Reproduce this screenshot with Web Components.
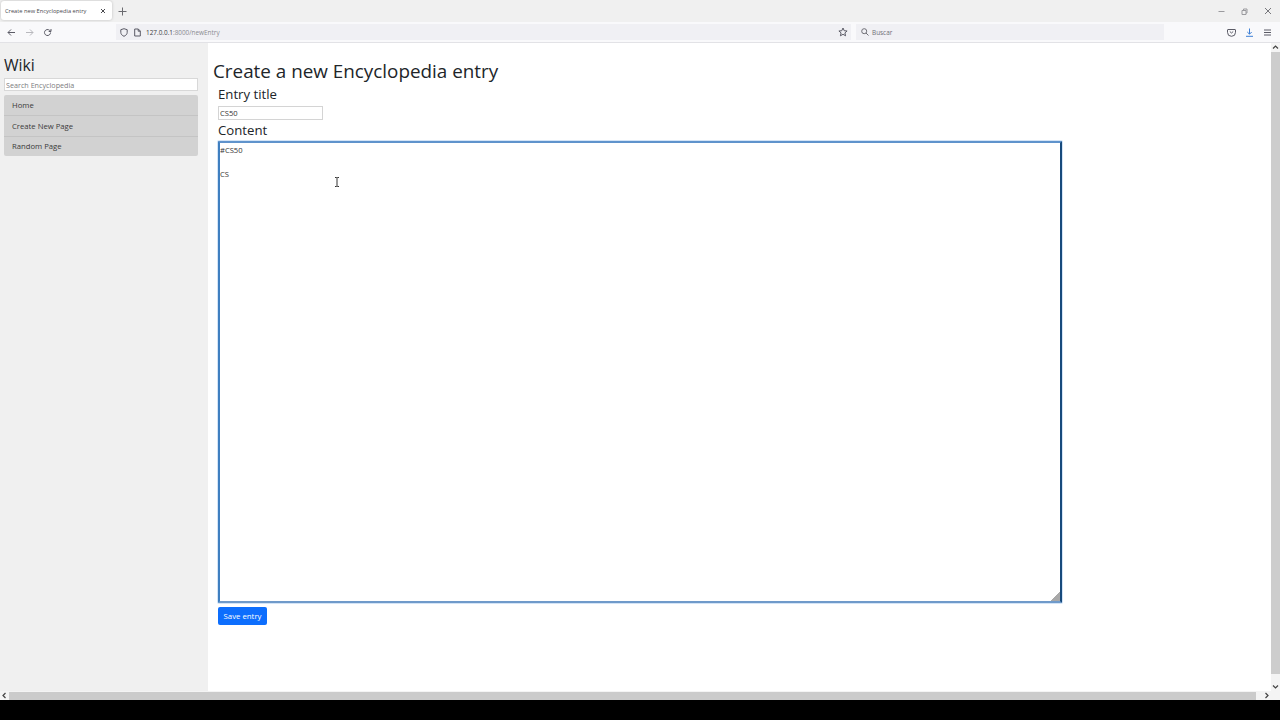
<!DOCTYPE html>
<html lang="en">
<head>
<meta charset="utf-8">
<title>Create new Encyclopedia entry</title>
<style>
  html, body { margin: 0; height: 100%; background: #000; overflow: hidden; }
  body { font-family: "Open Sans", "Noto Sans", sans-serif; }
  #shot { display: flex; flex-direction: column; width: 1280px; height: 700px; background: #fff; }
</style>
</head>
<body>
<div id="shot">
  <browser-tabs></browser-tabs>
  <browser-toolbar></browser-toolbar>
  <browser-viewport>
    <wiki-sidebar></wiki-sidebar>
    <entry-form></entry-form>
  </browser-viewport>
  <h-scrollbar></h-scrollbar>
</div>

<script>
class BrowserTabs extends HTMLElement {
  connectedCallback() {
    this.attachShadow({ mode: 'open' });
    this.shadowRoot.innerHTML = `
      <style>
        :host { display: flex; align-items: center; height: 22px; flex: none; background: #f0f0f0; color: #15141a; }
        .tab {
          display: flex; align-items: center; justify-content: space-between; align-self: flex-start;
          box-sizing: border-box; width: 111px; height: 19px; margin: 1px 0 0 1px; padding: 0 6px 0 4px;
          background: #fff; border-radius: 3px; box-shadow: 0 0 3px rgba(0,0,0,.22);
          font-size: 5.7px; color: #4a4a4f; white-space: nowrap;
        }
        svg { display: block; fill: none; stroke: currentColor; stroke-width: 1; }
        .new { margin-left: 6px; color: #6a6a6f; }
        .win { margin-left: auto; display: flex; align-items: center; gap: 16px; padding-right: 8px; color: #9a9a9e; }
        .close { color: #77777c; }
      </style>
      <div class="tab"><span>Create new Encyclopedia entry</span>
        <svg width="6" height="6" viewBox="0 0 6 6"><path d="M1 1l4 4M5 1L1 5"/></svg>
      </div>
      <svg class="new" width="9" height="9" viewBox="0 0 9 9"><path d="M4.5 .5v8M.5 4.5h8"/></svg>
      <div class="win">
        <svg width="7" height="7" viewBox="0 0 7 7"><path d="M.5 3.5h6"/></svg>
        <svg width="7" height="7" viewBox="0 0 7 7"><path d="M1 2.5h4v4H1zM2.5 2.5V1h3.5v4H5"/></svg>
        <svg class="close" width="8" height="8" viewBox="0 0 8 8"><path d="M1 1l6 6M7 1L1 7"/></svg>
      </div>
    `;
  }
}

class BrowserToolbar extends HTMLElement {
  connectedCallback() {
    this.attachShadow({ mode: 'open' });
    this.shadowRoot.innerHTML = `
      <style>
        :host {
          display: flex; align-items: center; box-sizing: border-box; height: 21px; flex: none;
          background: #f9f9fb; border-bottom: 1px solid #e2e2e6; color: #5b5b66; font-size: 6.4px;
        }
        svg { display: block; flex: none; fill: none; stroke: currentColor; stroke-width: 1; }
        .nav { display: flex; align-items: center; gap: 9px; margin-left: 7px; width: 109px; }
        .fwd { color: #b8b8bd; }
        .url {
          display: flex; align-items: center; box-sizing: border-box; width: 735px; height: 16px;
          padding: 0 3px 0 4px; background: #f0f0f4;
        }
        .url .addr { margin-left: 5px; color: #8a8a90; }
        .url .addr b { font-weight: 400; color: #3c3c42; }
        .url .star { margin-left: auto; }
        .find {
          display: flex; align-items: center; gap: 3px; box-sizing: border-box;
          width: 308px; height: 16px; margin-left: 5px; padding-left: 5px; background: #f0f0f4; color: #6f6f76;
        }
        .tools { display: flex; align-items: center; gap: 9px; margin-left: auto; padding-right: 8px; }
        .dl { color: #3d7fd6; }
      </style>
      <div class="nav">
        <svg width="9" height="9" viewBox="0 0 9 9"><path d="M8 4.5H1M4 1.5l-3 3 3 3"/></svg>
        <svg class="fwd" width="9" height="9" viewBox="0 0 9 9"><path d="M1 4.5h7M5 1.5l3 3-3 3"/></svg>
        <svg width="9" height="9" viewBox="0 0 9 9"><path d="M7.5 4.5a3 3 0 1 1-1-2.2L8 3.5V1M8 3.5H5.7"/></svg>
      </div>
      <div class="url">
        <svg width="8" height="9" viewBox="0 0 8 9"><path d="M4 .7l3.2 1v2.6c0 2-1.4 3.2-3.2 4-1.8-.8-3.2-2-3.2-4V1.700z"/></svg>
        <svg style="margin-left:6px" width="7" height="9" viewBox="0 0 7 9"><path d="M.7 1h3.600l2 2v5H.7zM4.200 1v2.200h2"/></svg>
        <span class="addr"><b>127.0.0.1</b>:8000/newEntry</span>
        <svg class="star" width="10" height="10" viewBox="0 0 10 10"><path d="M5 1l1.200 2.700 2.900.3-2.200 1.900.7 2.900L5 7.300 2.400 8.800l.7-2.900L.9 4l2.900-.3z"/></svg>
      </div>
      <div class="find">
        <svg width="8" height="8" viewBox="0 0 8 8"><circle cx="3.200" cy="3.200" r="2.500"/><path d="M5 5l2.500 2.500"/></svg>
        <span>Buscar</span>
      </div>
      <div class="tools">
        <svg width="9" height="9" viewBox="0 0 9 9"><path d="M1 1.500h7a.5.5 0 0 1 .5.5v2.300a4 4 0 0 1-8 0V2a.5.5 0 0 1 .5-.5zM2.800 3.500L4.500 5l1.700-1.500"/></svg>
        <svg class="dl" width="9" height="9" viewBox="0 0 9 9"><path d="M4.500 .5v5.500M2.300 4l2.200 2.200L6.700 4M1 8.300h7"/></svg>
        <svg width="9" height="9" viewBox="0 0 9 9"><path d="M1 2h7M1 4.500h7M1 7h7"/></svg>
      </div>
    `;
  }
}

class BrowserViewport extends HTMLElement {
  connectedCallback() {
    this.attachShadow({ mode: 'open' });
    this.shadowRoot.innerHTML = `
      <style>
        :host { display: flex; flex: 1; min-height: 0; background: #fff; }
        .page { display: flex; flex: 1; min-width: 0; }
        .bar {
          display: flex; flex-direction: column; align-items: center; justify-content: space-between;
          width: 9px; flex: none; background: #f4f4f4; color: #444;
        }
        .thumb { flex: 1; width: 100%; margin: 3px 0 11px; background: #cdcdcd; }
        svg { display: block; fill: none; stroke: currentColor; stroke-width: 1.2; }
      </style>
      <div class="page"><slot></slot></div>
      <div class="bar">
        <svg style="margin-top:2px" width="7" height="4" viewBox="0 0 7 4"><path d="M1 3.500l2.500-2.500L6 3.500"/></svg>
        <div class="thumb"></div>
        <svg style="margin-bottom:2px" width="7" height="4" viewBox="0 0 7 4"><path d="M1 .5L3.500 3 6 .5"/></svg>
      </div>
    `;
  }
}

class WikiSidebar extends HTMLElement {
  connectedCallback() {
    this.attachShadow({ mode: 'open' });
    this.shadowRoot.innerHTML = `
      <style>
        :host {
          display: block; box-sizing: border-box; width: 208px; flex: none; padding: 11px 10px 0 4px;
          background: #f0f0f0; color: #212529;
        }
        h2 { margin: 0; font-size: 15.800px; font-weight: 400; line-height: 22px; }
        input {
          display: block; box-sizing: border-box; width: 100%; height: 13px; margin: 2px 0 4px; padding: 0 1px;
          border: 1px solid #d8d8d8; background: #fff; font: 7.200px "Open Sans", sans-serif; color: #333;
        }
        input::placeholder { color: #7c7c80; opacity: 1; }
        nav { border-radius: 2px; background: #d2d2d2; overflow: hidden; }
        a { display: block; box-sizing: border-box; height: 20.400px; padding: 0 8px; line-height: 20px; font-size: 7.700px; color: #3a3a3a; text-decoration: none; }
        a + a { border-top: 1px solid #c4c4c4; }
        a:last-child { line-height: 19px; }
      </style>
      <h2>Wiki</h2>
      <input type="text" placeholder="Search Encyclopedia">
      <nav>
        <a href="#">Home</a>
        <a href="#">Create New Page</a>
        <a href="#">Random Page</a>
      </nav>
    `;
  }
}

class EntryForm extends HTMLElement {
  connectedCallback() {
    this.attachShadow({ mode: 'open' });
    this.shadowRoot.innerHTML = `
      <style>
        :host { display: block; flex: 1; min-width: 0; padding: 14px 0 0 5px; color: #212529; position: relative; }
        h1 { margin: 0; font-size: 18.850px; font-weight: 400; line-height: 28px; }
        form { margin-left: 5px; width: 844px; }
        label { display: block; font-size: 13.200px; line-height: 18px; }
        .title {
          display: block; box-sizing: border-box; width: 105px; height: 14px; margin: 3px 0 1px; padding: 0 1px;
          border: 1px solid #d4d4d4; background: #fff; font: 7.600px "Open Sans", sans-serif; color: #333;
        }
        textarea {
          display: block; box-sizing: border-box; width: 844px; height: 462px; margin: 2px 0 4px; padding: 1px 0;
          border: 2px solid; border-color: #5f93cc #174a7c #6f9aca #3f7fc0; outline: 0;
          box-shadow: 0 0 0 1px #d3e4f7; border-radius: 1px;
          background: #fff; font: 7.600px/12.200px "Open Sans", sans-serif; color: #333; resize: both;
        }
        textarea::-webkit-resizer { background: linear-gradient(135deg, transparent 70%, #a8a8a8 70%); }
        button {
          display: block; box-sizing: border-box; width: 49px; height: 18px; padding: 0; border: 0; border-radius: 2px;
          background: #0d6efd; color: #fff; font: 7.800px "Open Sans", sans-serif;
        }
        .cursor { position: absolute; left: 126px; top: 134px; display: block; fill: none; stroke: #333; stroke-width: 1; }
      </style>
      <h1>Create a new Encyclopedia entry</h1>
      <form onsubmit="return false">
        <label>Entry title</label>
        <input class="title" type="text" value="CS50">
        <label>Content</label>
        <textarea>#CS50

CS</textarea>
        <button type="button">Save entry</button>
      </form>
      <svg class="cursor" width="6" height="10" viewBox="0 0 6 10"><path d="M1 .5h1.500L3 1l.5-.5H5M3 1v8M1 9.500h1.500L3 9l.5.5H5"/></svg>
    `;
  }
}

class HScrollbar extends HTMLElement {
  connectedCallback() {
    this.attachShadow({ mode: 'open' });
    this.shadowRoot.innerHTML = `
      <style>
        :host { display: flex; align-items: center; height: 9px; flex: none; background: #f4f4f4; color: #444; }
        svg { display: block; flex: none; fill: none; stroke: currentColor; stroke-width: 1.200; }
        .thumb { width: 1247px; height: 8px; margin: 1px auto 0 3px; background: #cbcbcb; }
      </style>
      <svg style="margin-left:2px" width="4" height="7" viewBox="0 0 4 7"><path d="M3.500 1L1 3.500 3.500 6"/></svg>
      <div class="thumb"></div>
      <svg style="margin-right:11px" width="4" height="7" viewBox="0 0 4 7"><path d="M.5 1L3 3.500.5 6"/></svg>
    `;
  }
}

customElements.define('browser-tabs', BrowserTabs);
customElements.define('browser-toolbar', BrowserToolbar);
customElements.define('browser-viewport', BrowserViewport);
customElements.define('wiki-sidebar', WikiSidebar);
customElements.define('entry-form', EntryForm);
customElements.define('h-scrollbar', HScrollbar);
</script>
</body>
</html>
